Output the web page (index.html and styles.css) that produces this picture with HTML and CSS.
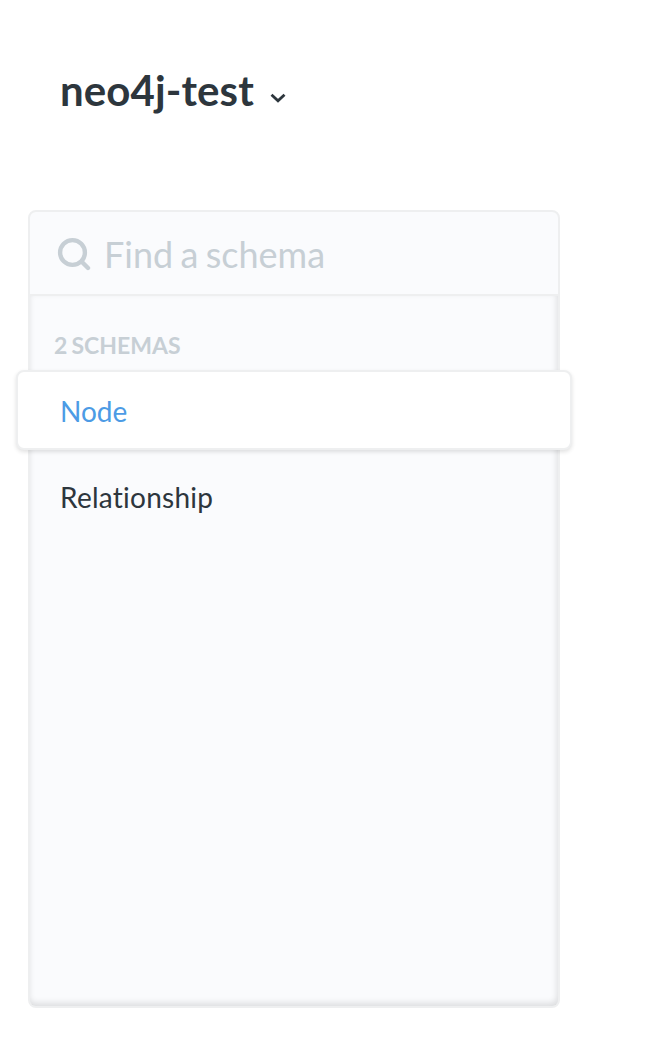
FILE: index.html
```html
<!DOCTYPE html>
<html lang="en">
<head>
<meta charset="utf-8">
<title>neo4j-test</title>
<link rel="stylesheet" href="styles.css">
</head>
<body>
<header class="database">
  <h1 class="database-name">neo4j-test</h1>
  <svg class="chevron" viewBox="0 0 16 10"><path d="M1.5 1.8L8 7.8l6.500-6"/></svg>
</header>
<main class="panel">
  <div class="search">
    <svg class="search-icon" viewBox="0 0 34 34"><circle cx="15.500" cy="15.500" r="12.400"/><path d="M24.500 24.500l6.500 6.500"/></svg>
    <span class="placeholder">Find a schema</span>
  </div>
  <div class="list">
    <h2 class="count">2 SCHEMAS</h2>
    <a class="item selected">Node</a>
    <a class="item spaced">Relationship</a>
  </div>
</main>
</body>
</html>
```
FILE: styles.css
```css
* { box-sizing: border-box; }
body {
  margin: 0;
  padding: 65px 110px 0 28px;
  background: #fff;
  color: #2d363d;
  font-family: Lato, sans-serif;
  font-variant-ligatures: none;
}
.database {
  display: flex;
  align-items: center;
  height: 50px;
  padding-left: 32px;
}
.database-name {
  margin: 0;
  font-size: 42px;
  line-height: 50px;
  font-weight: 700;
  letter-spacing: .1px;
}
.chevron {
  width: 16px;
  height: 10px;
  margin: 15px 0 0 16px;
  fill: none;
  stroke: currentColor;
  stroke-width: 2.8;
}
.panel {
  height: 798px;
  margin-top: 95px;
  display: flex;
  flex-direction: column;
  border: 2px solid #eeeff0;
  border-radius: 8px;
  background: #fafbfd;
}
.search {
  display: flex;
  align-items: center;
  height: 84px;
  padding: 2px 27px 0;
  border-bottom: 2px solid #eeeff0;
  color: #c7cfd5;
}
.search-icon {
  width: 34px;
  height: 34px;
  margin-right: 13px;
  fill: none;
  stroke: currentColor;
  stroke-width: 4.4;
  stroke-linecap: round;
}
.placeholder {
  font-size: 36px;
  line-height: 44px;
  word-spacing: -1.9px;
}
.list {
  flex: 1;
  padding-top: 35px;
  border-radius: 0 0 6px 6px;
  box-shadow: inset -1px -3px 6px rgba(0, 0, 0, .12);
}
.count {
  margin: 0 0 11px 24px;
  font-size: 23px;
  line-height: 28px;
  font-weight: 700;
  word-spacing: -1.5px;
  color: #c7cfd5;
}
.item {
  display: flex;
  align-items: center;
  height: 80px;
  margin: 0 -14px;
  padding: 2px 0 0 42px;
  border: 2px solid transparent;
  font-size: 28px;
}
.spaced { letter-spacing: .25px; }
.selected {
  margin-bottom: 6px;
  border-color: #eeeff0;
  border-radius: 8px;
  background: #fff;
  color: #4c9be5;
  box-shadow: 0 2px 4px rgba(0, 0, 0, .12);
}
```
